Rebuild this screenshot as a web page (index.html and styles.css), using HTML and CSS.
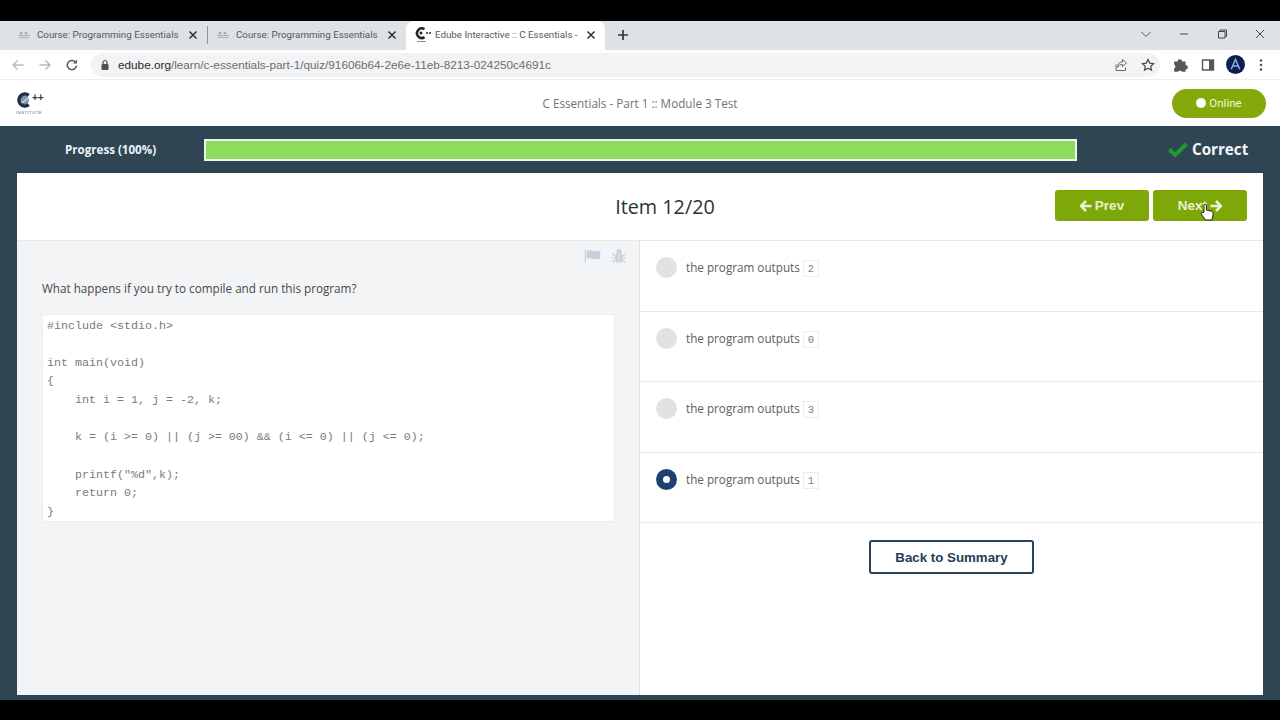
FILE: index.html
```html
<!DOCTYPE html>
<html lang="en">
<head>
<meta charset="utf-8">
<title>Edube Interactive :: C Essentials</title>
<link rel="stylesheet" href="styles.css">
</head>
<body>
<div class="letterbox-top"></div>
<div class="tabstrip">
  <div class="tab tab-first">
    <svg class="fav" viewBox="0 0 14 10"><g fill="#a9aeb3"><rect x="1" y="5" width="12" height="1"/><rect x="2" y="7" width="10" height="1"/><circle cx="4" cy="3" r="1.5"/><circle cx="9" cy="3" r="1.5"/></g></svg>
    <span class="tab-title">Course: Programming Essentials</span>
    <svg class="tab-x" viewBox="0 0 10 10"><path d="M1.5 1.500l7 7M8.500 1.500l-7 7" stroke="#2c2f33" stroke-width="1.500"/></svg>
  </div>
  <div class="tab-sep"></div>
  <div class="tab tab-second">
    <svg class="fav" viewBox="0 0 14 10"><g fill="#a9aeb3"><rect x="1" y="5" width="12" height="1"/><rect x="2" y="7" width="10" height="1"/><circle cx="4" cy="3" r="1.5"/><circle cx="9" cy="3" r="1.5"/></g></svg>
    <span class="tab-title">Course: Programming Essentials</span>
    <svg class="tab-x" viewBox="0 0 10 10"><path d="M1.5 1.500l7 7M8.500 1.500l-7 7" stroke="#2c2f33" stroke-width="1.500"/></svg>
  </div>
  <div class="tab tab-active">
    <svg class="fav fav-active" viewBox="0 0 16 16"><path d="M9.500 2.200A4.800 4.800 0 1 0 9.500 10.200" fill="none" stroke="#23292f" stroke-width="2.600"/><circle cx="6" cy="6" r="1.500" fill="#23292f"/><circle cx="12" cy="6" r="1" fill="#2a3138"/><circle cx="15" cy="6" r="1" fill="#2a3138"/><rect x="2" y="14" width="9" height="1" fill="#8a8f94"/></svg>
    <span class="tab-title">Edube Interactive :: C Essentials -</span>
    <svg class="tab-x" viewBox="0 0 10 10"><path d="M1.5 1.500l7 7M8.500 1.500l-7 7" stroke="#2c2f33" stroke-width="1.500"/></svg>
  </div>
  <svg class="newtab" viewBox="0 0 12 12"><path d="M6 1v10M1 6h10" stroke="#33373b" stroke-width="1.700"/></svg>
  <div class="win-controls">
    <svg class="win-ic" viewBox="0 0 12 12"><path d="M1.500 4l4.500 4.500L10.500 4" fill="none" stroke="#555a5f" stroke-width="1"/></svg>
    <svg class="win-ic" viewBox="0 0 12 12"><path d="M2 6h8" stroke="#44484c" stroke-width="1"/></svg>
    <svg class="win-ic" viewBox="0 0 12 12"><path d="M2.500 3.500h6.500v6.500h-6.500zM4 3.500V2h6.500v6.500H9" fill="none" stroke="#44484c" stroke-width="1"/></svg>
    <svg class="win-ic" viewBox="0 0 12 12"><path d="M2 2l8 8M10 2l-8 8" stroke="#44484c" stroke-width="1"/></svg>
  </div>
</div>
<div class="toolbar">
  <svg class="nav-ic" viewBox="0 0 14 14"><path d="M12.500 7H2M6.500 2.500L2 7l4.500 4.500" fill="none" stroke="#b6b9bc" stroke-width="1.400"/></svg>
  <svg class="nav-ic" viewBox="0 0 14 14"><path d="M1.500 7H12M7.500 2.500L12 7l-4.500 4.500" fill="none" stroke="#b6b9bc" stroke-width="1.400"/></svg>
  <svg class="nav-ic" viewBox="0 0 14 14"><path d="M11.500 7.500a4.600 4.600 0 1 1-1.300-3.700" fill="none" stroke="#54585c" stroke-width="1.500"/><path d="M12 1.500v4H8z" fill="#54585c"/></svg>
  <div class="omnibox">
    <svg class="lock" viewBox="0 0 10 12"><path d="M3 5V3.500a2 2 0 0 1 4 0V5" fill="none" stroke="#4c5054" stroke-width="1.200"/><rect x="1.500" y="5" width="7" height="6" rx="1" fill="#4c5054"/></svg>
    <span class="url"><span class="url-host">edube.org</span>/learn/c-essentials-part-1/quiz/91606b64-2e6e-11eb-8213-024250c4691c</span>
    <svg class="omni-ic" viewBox="0 0 14 14"><path d="M2 6.500V12.500h9.500V9.500" fill="none" stroke="#666a6e" stroke-width="1"/><path d="M8.500 1.500l4 3.500-4 3.500V6.500c-2.500 0-4 1-5 3 0-3.500 2-5.500 5-5.500z" fill="none" stroke="#666a6e" stroke-width="1"/></svg>
    <svg class="omni-ic star" viewBox="0 0 14 14"><path d="M7 1.500l1.700 3.600 3.900.5-2.900 2.700.8 3.900L7 10.300l-3.500 1.900.8-3.900L1.400 5.600l3.900-.5z" fill="none" stroke="#43474b" stroke-width="1.200"/></svg>
  </div>
  <svg class="puzzle" viewBox="0 0 14 14"><path d="M1 4h3a2 2 0 0 1 4 0h3v3a2 2 0 0 1 0 4v2H8a2 2 0 0 0-3.500 0H1v-3a2 2 0 0 0 0-3.500z" fill="#54585c"/></svg>
  <svg class="panel" viewBox="0 0 14 14"><path d="M1.500 2h11v10h-11z" fill="none" stroke="#54585c" stroke-width="1.400"/><rect x="8" y="2" width="4.500" height="10" fill="#54585c"/></svg>
  <div class="avatar"><svg viewBox="0 0 20 20"><path d="M5.500 15L10 4.500 14.500 15M7 11.500h6" fill="none" stroke="#8fb0e8" stroke-width="1.500"/></svg></div>
  <svg class="kebab" viewBox="0 0 4 14"><circle cx="2" cy="2.500" r="1.300" fill="#54585c"/><circle cx="2" cy="7" r="1.300" fill="#54585c"/><circle cx="2" cy="11.500" r="1.300" fill="#54585c"/></svg>
</div>
<header class="app-head">
  <div class="logo">
    <div class="logo-mark">
      <svg viewBox="0 0 16 16"><circle cx="8" cy="8" r="5" fill="#7e94ae"/><path d="M12.700 3.300A6 6 0 1 0 12.700 12.700" fill="none" stroke="#1f3048" stroke-width="3.600"/><path d="M5 10.500c2.500-.3 5-2 7-5" fill="none" stroke="#c3d0de" stroke-width="1.400"/></svg>
      <span class="logo-pp">++</span>
    </div>
    <div class="logo-name">INSTITUTE</div>
  </div>
  <div class="head-title">C Essentials - Part 1 :: Module 3 Test</div>
  <div class="online"><span class="online-dot"></span>Online</div>
</header>
<main class="app-body">
  <div class="progress-row">
    <div class="progress-label">Progress (100%)</div>
    <div class="progress-bar"></div>
    <div class="verdict">
      <svg viewBox="0 0 20 16"><path d="M1.500 8.500l5.500 5.500L18.500 3" fill="none" stroke="#1f9a30" stroke-width="4"/></svg>
      <span>Correct</span>
    </div>
  </div>
  <section class="card">
    <div class="card-head">
      <div class="item-no">Item 12/20</div>
      <div class="pager">
        <div class="pager-btn">
          <svg viewBox="0 0 12 12"><path d="M6 1L1 6l5 5M1.500 6H11.500" fill="none" stroke="#e9f1d0" stroke-width="2.600"/></svg>
          <span>Prev</span>
        </div>
        <div class="pager-btn">
          <span>Next</span>
          <svg viewBox="0 0 12 12"><path d="M6 1l5 5-5 5M10.500 6H.5" fill="none" stroke="#e9f1d0" stroke-width="2.600"/></svg>
          <svg class="cursor" viewBox="0 0 14 18"><path d="M4 9V2.500a1.200 1.200 0 0 1 2.400 0V7l5 1.200c1 .3 1.600 1 1.600 2V13l-1.200 4H5.500L1.500 11.500c-.8-1.200.5-2.400 1.500-1.500z" fill="#fff" stroke="#222" stroke-width="1"/></svg>
        </div>
      </div>
    </div>
    <div class="card-body">
      <div class="question">
        <div class="q-tools">
          <svg class="q-flag" viewBox="0 0 20 16"><path d="M1.500 1v14" stroke="#c5d2dd" stroke-width="1.500"/><path d="M3 2c4-1.500 7 1.500 15 0v9c-7 1.500-11-1.500-15 0z" fill="#c5d2dd"/></svg>
          <svg class="q-bug" viewBox="0 0 18 18"><g fill="#c8d2d8"><ellipse cx="9" cy="11" rx="4.500" ry="6"/><circle cx="9" cy="4" r="3"/></g><path d="M9 7v10" stroke="#f3f4f5" stroke-width="1"/><path d="M1.500 6l3 3M16.500 6l-3 3M1 11h3M17 11h-3M2 16l3-2.500M16 16l-3-2.500" stroke="#c8d2d8" stroke-width="1.300"/></svg>
        </div>
        <p class="q-text">What happens if you try to compile and run this program?</p>
        <pre class="code">#include &lt;stdio.h&gt;

int main(void)
{
    int i = 1, j = -2, k;

    k = (i &gt;= 0) || (j &gt;= 00) &amp;&amp; (i &lt;= 0) || (j &lt;= 0);

    printf("%d",k);
    return 0;
}</pre>
      </div>
      <div class="answers">
        <div class="answer"><span class="radio"></span><span class="a-text">the program outputs</span><code class="a-val">2</code></div>
        <div class="answer"><span class="radio"></span><span class="a-text">the program outputs</span><code class="a-val">0</code></div>
        <div class="answer"><span class="radio"></span><span class="a-text">the program outputs</span><code class="a-val">3</code></div>
        <div class="answer"><span class="radio radio-on"></span><span class="a-text">the program outputs</span><code class="a-val">1</code></div>
        <div class="summary-row"><div class="summary-btn">Back to Summary</div></div>
      </div>
    </div>
  </section>
</main>
<div class="letterbox-bottom"></div>
</body>
</html>
```
FILE: styles.css
```css
* { box-sizing: border-box; }
html, body { margin: 0; height: 720px; overflow: hidden; }
body { display: flex; flex-direction: column; background: #000; font-family: "Open Sans", sans-serif; color: #4a5054; }
svg { display: block; flex: none; }

.letterbox-top { height: 21px; background: #000; flex: none; }
.letterbox-bottom { height: 20px; background: #000; flex: none; }

.tabstrip { height: 29px; flex: none; background: #dee1e6; display: flex; align-items: center; font-family: "Roboto", sans-serif; font-size: 9.750px; color: #55595d; }
.tab { height: 29px; display: flex; align-items: center; flex: none; padding-bottom: 2px; }
.tab-first { width: 207px; padding-left: 17px; }
.tab-second { width: 198px; padding-left: 8px; }
.tab-sep { width: 1px; height: 18px; background: #8f9296; flex: none; margin-bottom: 2px; }
.tab-active { background: #fff; border-radius: 8px 8px 0 0; width: 199px; padding-left: 9px; color: #55595d; }
.fav { width: 14px; height: 10px; margin-right: 6px; }
.fav-active { width: 16px; height: 16px; margin-right: 4px; }
.tab-title { flex: 1; min-width: 0; white-space: nowrap; }
.tab-x { width: 10px; height: 10px; margin-right: 9px; }
.newtab { width: 12px; height: 12px; margin: 0 0 2px 12px; }
.win-controls { margin-left: auto; display: flex; align-items: center; gap: 26px; padding: 0 14px 4px 0; }
.win-ic { width: 12px; height: 12px; }

.toolbar { height: 30px; flex: none; background: #fff; display: flex; align-items: center; padding-left: 11px; border-bottom: 1px solid #eceded; }
.nav-ic { width: 14px; height: 14px; margin-right: 13px; }
.omnibox { margin-left: -1px; width: 1069px; height: 24px; background: #f1f3f4; border-radius: 12px; display: flex; align-items: center; padding-left: 9px; margin-right: 13px; }
.lock { width: 10px; height: 12px; margin-right: 8px; }
.url { font-family: "Liberation Sans", sans-serif; font-size: 11.760px; color: #6a6e72; flex: 1; white-space: nowrap; }
.url-host { color: #26292c; }
.omni-ic { width: 14px; height: 14px; margin-right: 13px; }
.omni-ic.star { margin-right: 5px; }
.puzzle { width: 16px; height: 16px; margin-right: 12px; }
.panel { width: 14px; height: 14px; margin-right: 11px; }
.avatar { width: 19px; height: 19px; border-radius: 50%; background: #0c1f4d; margin-right: 14px; flex: none; }
.kebab { width: 4px; height: 14px; }

.app-head { height: 46px; flex: none; background: #fff; display: flex; align-items: center; padding: 0 14px 0 16px; }
.logo { width: 30px; }
.logo-mark { display: flex; align-items: center; height: 16px; }
.logo-mark svg { width: 16px; height: 16px; }
.logo-pp { font: bold 10px/1 "Liberation Sans", sans-serif; color: #2a3a4a; margin-top: -3px; }
.logo-name { font: 4px/1 "Liberation Sans", sans-serif; color: #5a6066; letter-spacing: .6px; margin-top: 3px; white-space: nowrap; }
.head-title { flex: 1; text-align: center; font-size: 11.700px; color: #6d7377; padding-left: 62px; }
.online { width: 94px; height: 29px; border-radius: 15px; background: #85a90a; color: #f1f7dc; font-family: "Roboto", sans-serif; font-size: 11.500px; display: flex; align-items: center; justify-content: center; gap: 3px; }
.online-dot { width: 10px; height: 10px; border-radius: 50%; background: #fff; }

.app-body { flex: 1; min-height: 0; background: #2f4553; padding: 0 17px 5px; display: flex; flex-direction: column; }
.progress-row { height: 47px; flex: none; display: flex; align-items: center; }
.progress-label { width: 187px; padding-left: 48px; font-size: 11.600px; font-weight: 700; color: #eef4f7; white-space: nowrap; }
.progress-bar { width: 873px; height: 22px; background: #8ddc5e; border: 2px solid #eef5ea; flex: none; }
.verdict { margin: -1px 0 0 91px; display: flex; align-items: center; gap: 4px; color: #f2f6f8; font-size: 15.200px; font-weight: 700; white-space: nowrap; }
.verdict svg { width: 20px; height: 16px; }

.card { flex: 1; min-height: 0; background: #fff; display: flex; flex-direction: column; }
.card-head { height: 68px; flex: none; display: flex; align-items: center; border-bottom: 1px solid #e8eaea; padding-right: 16px; }
.item-no { flex: 1; text-align: center; font-size: 19.800px; color: #2e3336; padding-left: 258px; }
.pager { display: flex; gap: 4px; margin-top: -2px; }
.pager-btn { width: 94px; height: 31px; border-radius: 3px; background: #7ea70a; color: #e9f1d0; font-family: "Liberation Sans", sans-serif; font-weight: 700; font-size: 13.500px; display: flex; align-items: center; justify-content: center; gap: 3px; position: relative; }
.pager-btn svg { width: 12px; height: 12px; }
.pager-btn .cursor { position: absolute; left: 47px; top: 13px; width: 14px; height: 18px; }

.card-body { flex: 1; min-height: 0; display: flex; }
.question { width: 623px; flex: none; background: #f3f4f5; border-right: 1px solid #e2e4e5; padding: 0 24px 0 25px; display: flex; flex-direction: column; }
.q-tools { display: flex; justify-content: flex-end; gap: 9px; padding-top: 7px; height: 32px; margin-right: -12px; }
.q-flag { width: 18px; height: 16px; }
.q-bug { width: 16px; height: 16px; }
.q-text { margin: 5px 0 0; font-size: 11.700px; line-height: 20px; color: #43494d; }
.code { margin: 16px 0 0; background: #fff; border: 1px solid #eef0f0; padding: 1.500px 4px 0; height: 208px; font-family: "Liberation Mono", monospace; font-size: 11.660px; line-height: 18.650px; color: #777b7d; overflow: hidden; }

.answers { flex: 1; min-width: 0; display: flex; flex-direction: column; }
.answer { height: 70.500px; flex: none; border-bottom: 1px solid #e9ebeb; display: flex; align-items: flex-start; padding: 16px 0 0 16px; }
.radio { width: 21px; height: 21px; border-radius: 50%; background: #e1e3e1; margin-right: 9px; flex: none; }
.radio-on { background: #1d4272; position: relative; }
.radio-on::after { content: ""; position: absolute; left: 7px; top: 7px; width: 7px; height: 7px; border-radius: 50%; background: #fff; }
.a-text { font-size: 11.700px; line-height: 18px; color: #5a6062; margin: 1px 3px 0 0; }
.a-val { font-family: "Liberation Mono", monospace; font-size: 10.500px; line-height: 14px; color: #7b8083; border: 1px solid #eceeee; padding: 1px 4px 0; margin-top: 3px; height: 17px; }
.summary-row { flex: 1; display: flex; justify-content: center; padding-top: 17px; }
.summary-btn { width: 165px; height: 34px; border: 2px solid #2a4158; border-radius: 3px; display: flex; align-items: center; justify-content: center; font-family: "Liberation Sans", sans-serif; font-size: 13.300px; font-weight: 700; color: #243c56; background: #fff; }
```
